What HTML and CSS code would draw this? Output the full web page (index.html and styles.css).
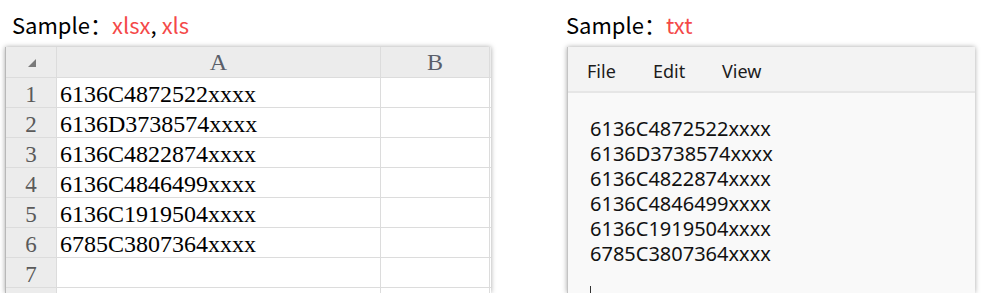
FILE: index.html
```html
<!DOCTYPE html>
<html lang="en">
<head>
    <meta charset="UTF-8">
    <title>Import samples</title>
    <link rel="stylesheet" href="styles.css">
</head>
<body>
    <div class="page">
        <section class="sample sample-xls">
            <h2 class="title">Sample：<span class="ext">xlsx</span>, <span class="ext">xls</span></h2>
            <div class="sheet">
                <div class="row head">
                    <div class="cell corner"><span class="tri"></span></div>
                    <div class="cell col-a">A</div>
                    <div class="cell col-b">B</div>
                    <div class="cell col-end"></div>
                </div>
                <div class="row">
                    <div class="cell num">1</div>
                    <div class="cell col-a">6136C4872522xxxx</div>
                    <div class="cell col-b"></div>
                    <div class="cell col-end"></div>
                </div>
                <div class="row">
                    <div class="cell num">2</div>
                    <div class="cell col-a">6136D3738574xxxx</div>
                    <div class="cell col-b"></div>
                    <div class="cell col-end"></div>
                </div>
                <div class="row">
                    <div class="cell num">3</div>
                    <div class="cell col-a">6136C4822874xxxx</div>
                    <div class="cell col-b"></div>
                    <div class="cell col-end"></div>
                </div>
                <div class="row">
                    <div class="cell num">4</div>
                    <div class="cell col-a">6136C4846499xxxx</div>
                    <div class="cell col-b"></div>
                    <div class="cell col-end"></div>
                </div>
                <div class="row">
                    <div class="cell num">5</div>
                    <div class="cell col-a">6136C1919504xxxx</div>
                    <div class="cell col-b"></div>
                    <div class="cell col-end"></div>
                </div>
                <div class="row">
                    <div class="cell num">6</div>
                    <div class="cell col-a">6785C3807364xxxx</div>
                    <div class="cell col-b"></div>
                    <div class="cell col-end"></div>
                </div>
                <div class="row">
                    <div class="cell num">7</div>
                    <div class="cell col-a"></div>
                    <div class="cell col-b"></div>
                    <div class="cell col-end"></div>
                </div>
                <div class="row">
                    <div class="cell num"></div>
                    <div class="cell col-a"></div>
                    <div class="cell col-b"></div>
                    <div class="cell col-end"></div>
                </div>
            </div>
        </section>

        <section class="sample sample-txt">
            <h2 class="title">Sample：<span class="ext">txt</span></h2>
            <div class="notepad">
                <div class="menu">
                    <span class="menu-item">File</span>
                    <span class="menu-item">Edit</span>
                    <span class="menu-item">View</span>
                </div>
                <div class="text-area">
                    <div class="line">6136C4872522xxxx</div>
                    <div class="line">6136D3738574xxxx</div>
                    <div class="line">6136C4822874xxxx</div>
                    <div class="line">6136C4846499xxxx</div>
                    <div class="line">6136C1919504xxxx</div>
                    <div class="line">6785C3807364xxxx</div>
                    <div class="line"><span class="caret"></span></div>
                </div>
            </div>
        </section>
    </div>
</body>
</html>
```

FILE: styles.css
```css
/* Sample file previews */
body {
    margin: 0;
    background: #fff;
    font-family: "Noto Sans CJK SC", "Noto Sans", sans-serif;
    color: #000;
}
.page {
    display: flex;
    gap: 76px;
    padding: 0 5px;
}
.title {
    margin: 0;
    height: 44px;
    padding-top: 10px;
    box-sizing: border-box;
    font-size: 22px;
    font-weight: normal;
    line-height: 28px;
    white-space: nowrap;
}
.ext {
    color: #f44848;
}
.sample-xls .title {
    padding-left: 7px;
}
.sample-txt .title {
    margin-left: -1px;
}

/* spreadsheet */
.sheet {
    margin-top: 3px;
    width: 485px;
    height: 246px;
    overflow: hidden;
    background: #fff;
    border-left: 1px solid #b8b8b8;
    box-shadow: 0 0 5px rgba(0,0,0,0.35);
    font-family: "Liberation Serif", "DejaVu Serif", serif;
}
.row {
    display: flex;
    height: 29px;
    border-bottom: 1px solid #dcdcdc;
}
.row.head {
    height: 30px;
    background: #ececec;
}
.cell {
    box-sizing: border-box;
    border-right: 1px solid #dcdcdc;
    line-height: 33px;
    white-space: nowrap;
}
.head .cell {
    line-height: 31px;
}
.corner, .num {
    width: 51px;
    background: #ececec;
    text-align: center;
    color: #5a5a5a;
    font-size: 23px;
}
.corner {
    position: relative;
}
.tri {
    position: absolute;
    left: 22px;
    top: 12px;
    width: 0;
    height: 0;
    border-left: 8px solid transparent;
    border-bottom: 8px solid #7a7a7a;
}
.col-a {
    width: 324px;
    padding-left: 3px;
    font-size: 24px;
}
.col-b {
    width: 109px;
}
.col-end {
    flex: 1;
    border-right: none;
}
.head .col-a, .head .col-b {
    text-align: center;
    padding-left: 0;
    font-size: 24px;
    color: #5a5f6a;
}

/* notepad */
.notepad {
    margin-top: 3px;
    width: 407px;
    height: 246px;
    overflow: hidden;
    background: #f9f9f9;
    border-left: 1px solid #c4c4c4;
    box-shadow: 0 0 5px rgba(0,0,0,0.35);
}
.menu {
    display: flex;
    height: 44px;
    padding-left: 19px;
    background: #f3f3f3;
    border-bottom: 2px solid #e6e6e6;
    font-family: "Noto Sans", sans-serif;
    font-size: 18px;
    color: #1c1c1c;
    line-height: 48px;
}
.menu-item:nth-child(1) { width: 66px; }
.menu-item:nth-child(2) { width: 69px; }
.text-area {
    padding: 23px 0 0 22px;
    font-family: "Noto Sans", sans-serif;
    font-size: 20px;
    line-height: 25px;
    color: #111;
}
.caret {
    display: inline-block;
    width: 1px;
    height: 20px;
    margin-top: 20px;
    background: #333;
    vertical-align: top;
}
```
